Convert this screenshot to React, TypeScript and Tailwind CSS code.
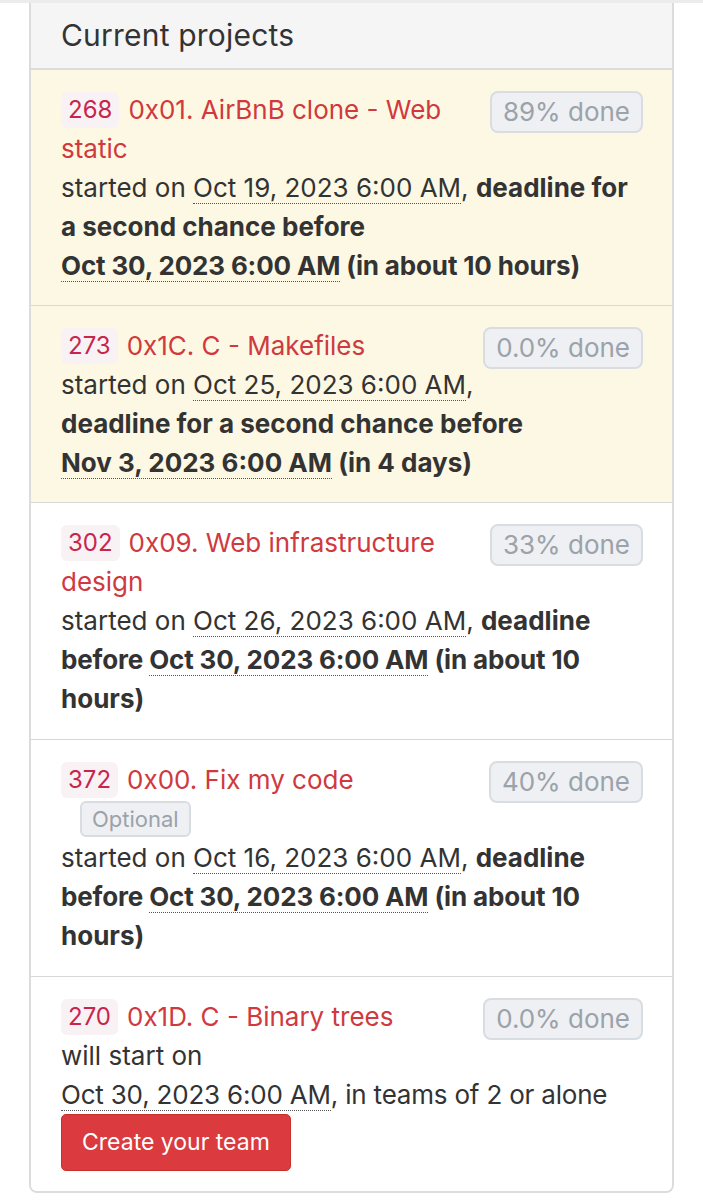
import React from "react";

const F = { fontFamily: "Inter, 'Noto Sans', 'Liberation Sans', sans-serif" };

function Code({ n }: { n: string }) {
  return (
    <span className="inline-flex h-[36px] items-center rounded-[6px] bg-[#f9f2f4] px-[7px] text-[24px] leading-none text-[#c7254e] mr-[9px]">
      {n}
    </span>
  );
}

function Done({ v }: { v: string }) {
  return (
    <span className="mt-[1px] inline-flex h-[42px] shrink-0 items-center rounded-[8px] border-2 border-[#d9dde2] bg-[#eef0f3] px-[11px] text-[26px] leading-none text-[#9ba2a9]">
      {v}
    </span>
  );
}

function D({ children }: { children: React.ReactNode }) {
  return <span className="border-b border-dotted border-[#555]">{children}</span>;
}

function Line({ children }: { children: React.ReactNode }) {
  return <div className="h-[39px] whitespace-nowrap leading-[39px]">{children}</div>;
}

function TitleRow({ code, title, done }: { code: string; title: string; done: string }) {
  return (
    <div className="flex h-[39px] items-start justify-between">
      <div className="flex h-[39px] items-center whitespace-nowrap">
        <Code n={code} />
        <span className="text-[#d0393e]">{title}</span>
      </div>
      <Done v={done} />
    </div>
  );
}

export default function App() {
  return (
    <div className="min-h-[1200px] bg-white text-[26px] text-[#333]" style={F}>
      <div className="h-[3px] bg-[#ececec]" />
      <div className="mx-[29px] overflow-hidden rounded-b-[8px] border-2 border-t-0 border-[#dcdcdc]">
        <div className="flex h-[67px] items-center border-b-2 border-[#dddddd] bg-[#f5f5f5] px-[30px] text-[30px] tracking-[0.2px] text-[#333]">
          Current projects
        </div>

        <div className="border-b-[1.5px] border-[#dcdad0] bg-[#fcf8e3] px-[30px] pr-[29px] py-[20px]">
          <TitleRow code="268" title="0x01. AirBnB clone - Web" done="89% done" />
          <Line>
            <span className="text-[#d0393e]">static</span>
          </Line>
          <Line>
            started on <D>Oct 19, 2023 6:00 AM</D>, <b>deadline for</b>
          </Line>
          <Line>
            <b>a second chance before</b>
          </Line>
          <Line>
            <b className="tracking-[-0.15px]">
              <D>Oct 30, 2023 6:00 AM</D> (in about 10 hours)
            </b>
          </Line>
        </div>

        <div className="border-b-[1.5px] border-[#d8d8d8] bg-[#fcf8e3] px-[30px] pr-[29px] py-[20px]">
          <TitleRow code="273" title="0x1C. C - Makefiles" done="0.0% done" />
          <Line>
            started on <D>Oct 25, 2023 6:00 AM</D>,
          </Line>
          <Line>
            <b>deadline for a second chance before</b>
          </Line>
          <Line>
            <b>
              <D>Nov 3, 2023 6:00 AM</D> (in 4 days)
            </b>
          </Line>
        </div>

        <div className="border-b-[1.5px] border-[#d8d8d8] bg-white px-[30px] pr-[29px] pt-[20px] pb-[21px]">
          <TitleRow code="302" title="0x09. Web infrastructure" done="33% done" />
          <Line>
            <span className="text-[#d0393e]">design</span>
          </Line>
          <Line>
            started on <D>Oct 26, 2023 6:00 AM</D>, <b>deadline</b>
          </Line>
          <Line>
            <b className="tracking-[-0.15px]">
              before <D>Oct 30, 2023 6:00 AM</D> (in about 10
            </b>
          </Line>
          <Line>
            <b>hours)</b>
          </Line>
        </div>

        <div className="border-b-[1.5px] border-[#d8d8d8] bg-white px-[30px] pr-[29px] pt-[20px] pb-[21px]">
          <TitleRow code="372" title="0x00. Fix my code" done="40% done" />
          <div className="flex h-[39px] items-center">
            <span className="ml-[19px] inline-flex h-[36px] items-center rounded-[6px] border-2 border-[#d9dde2] bg-[#eef0f3] px-[10px] text-[22px] leading-none text-[#9ba2a9]">
              Optional
            </span>
          </div>
          <Line>
            started on <D>Oct 16, 2023 6:00 AM</D>, <b>deadline</b>
          </Line>
          <Line>
            <b className="tracking-[-0.15px]">
              before <D>Oct 30, 2023 6:00 AM</D> (in about 10
            </b>
          </Line>
          <Line>
            <b>hours)</b>
          </Line>
        </div>

        <div className="bg-white px-[30px] pr-[29px] pt-[20px] pb-[20px]">
          <TitleRow code="270" title="0x1D. C - Binary trees" done="0.0% done" />
          <Line>will start on</Line>
          <Line>
            <span className="tracking-[-0.2px]">
              <D>Oct 30, 2023 6:00 AM</D>, in teams of 2 or alone
            </span>
          </Line>
          <button className="flex h-[57px] items-center rounded-[5px] border border-[#c9302c] bg-[#db3a3e] px-[20px] text-[23px] text-white">
            Create your team
          </button>
        </div>
      </div>
    </div>
  );
}
